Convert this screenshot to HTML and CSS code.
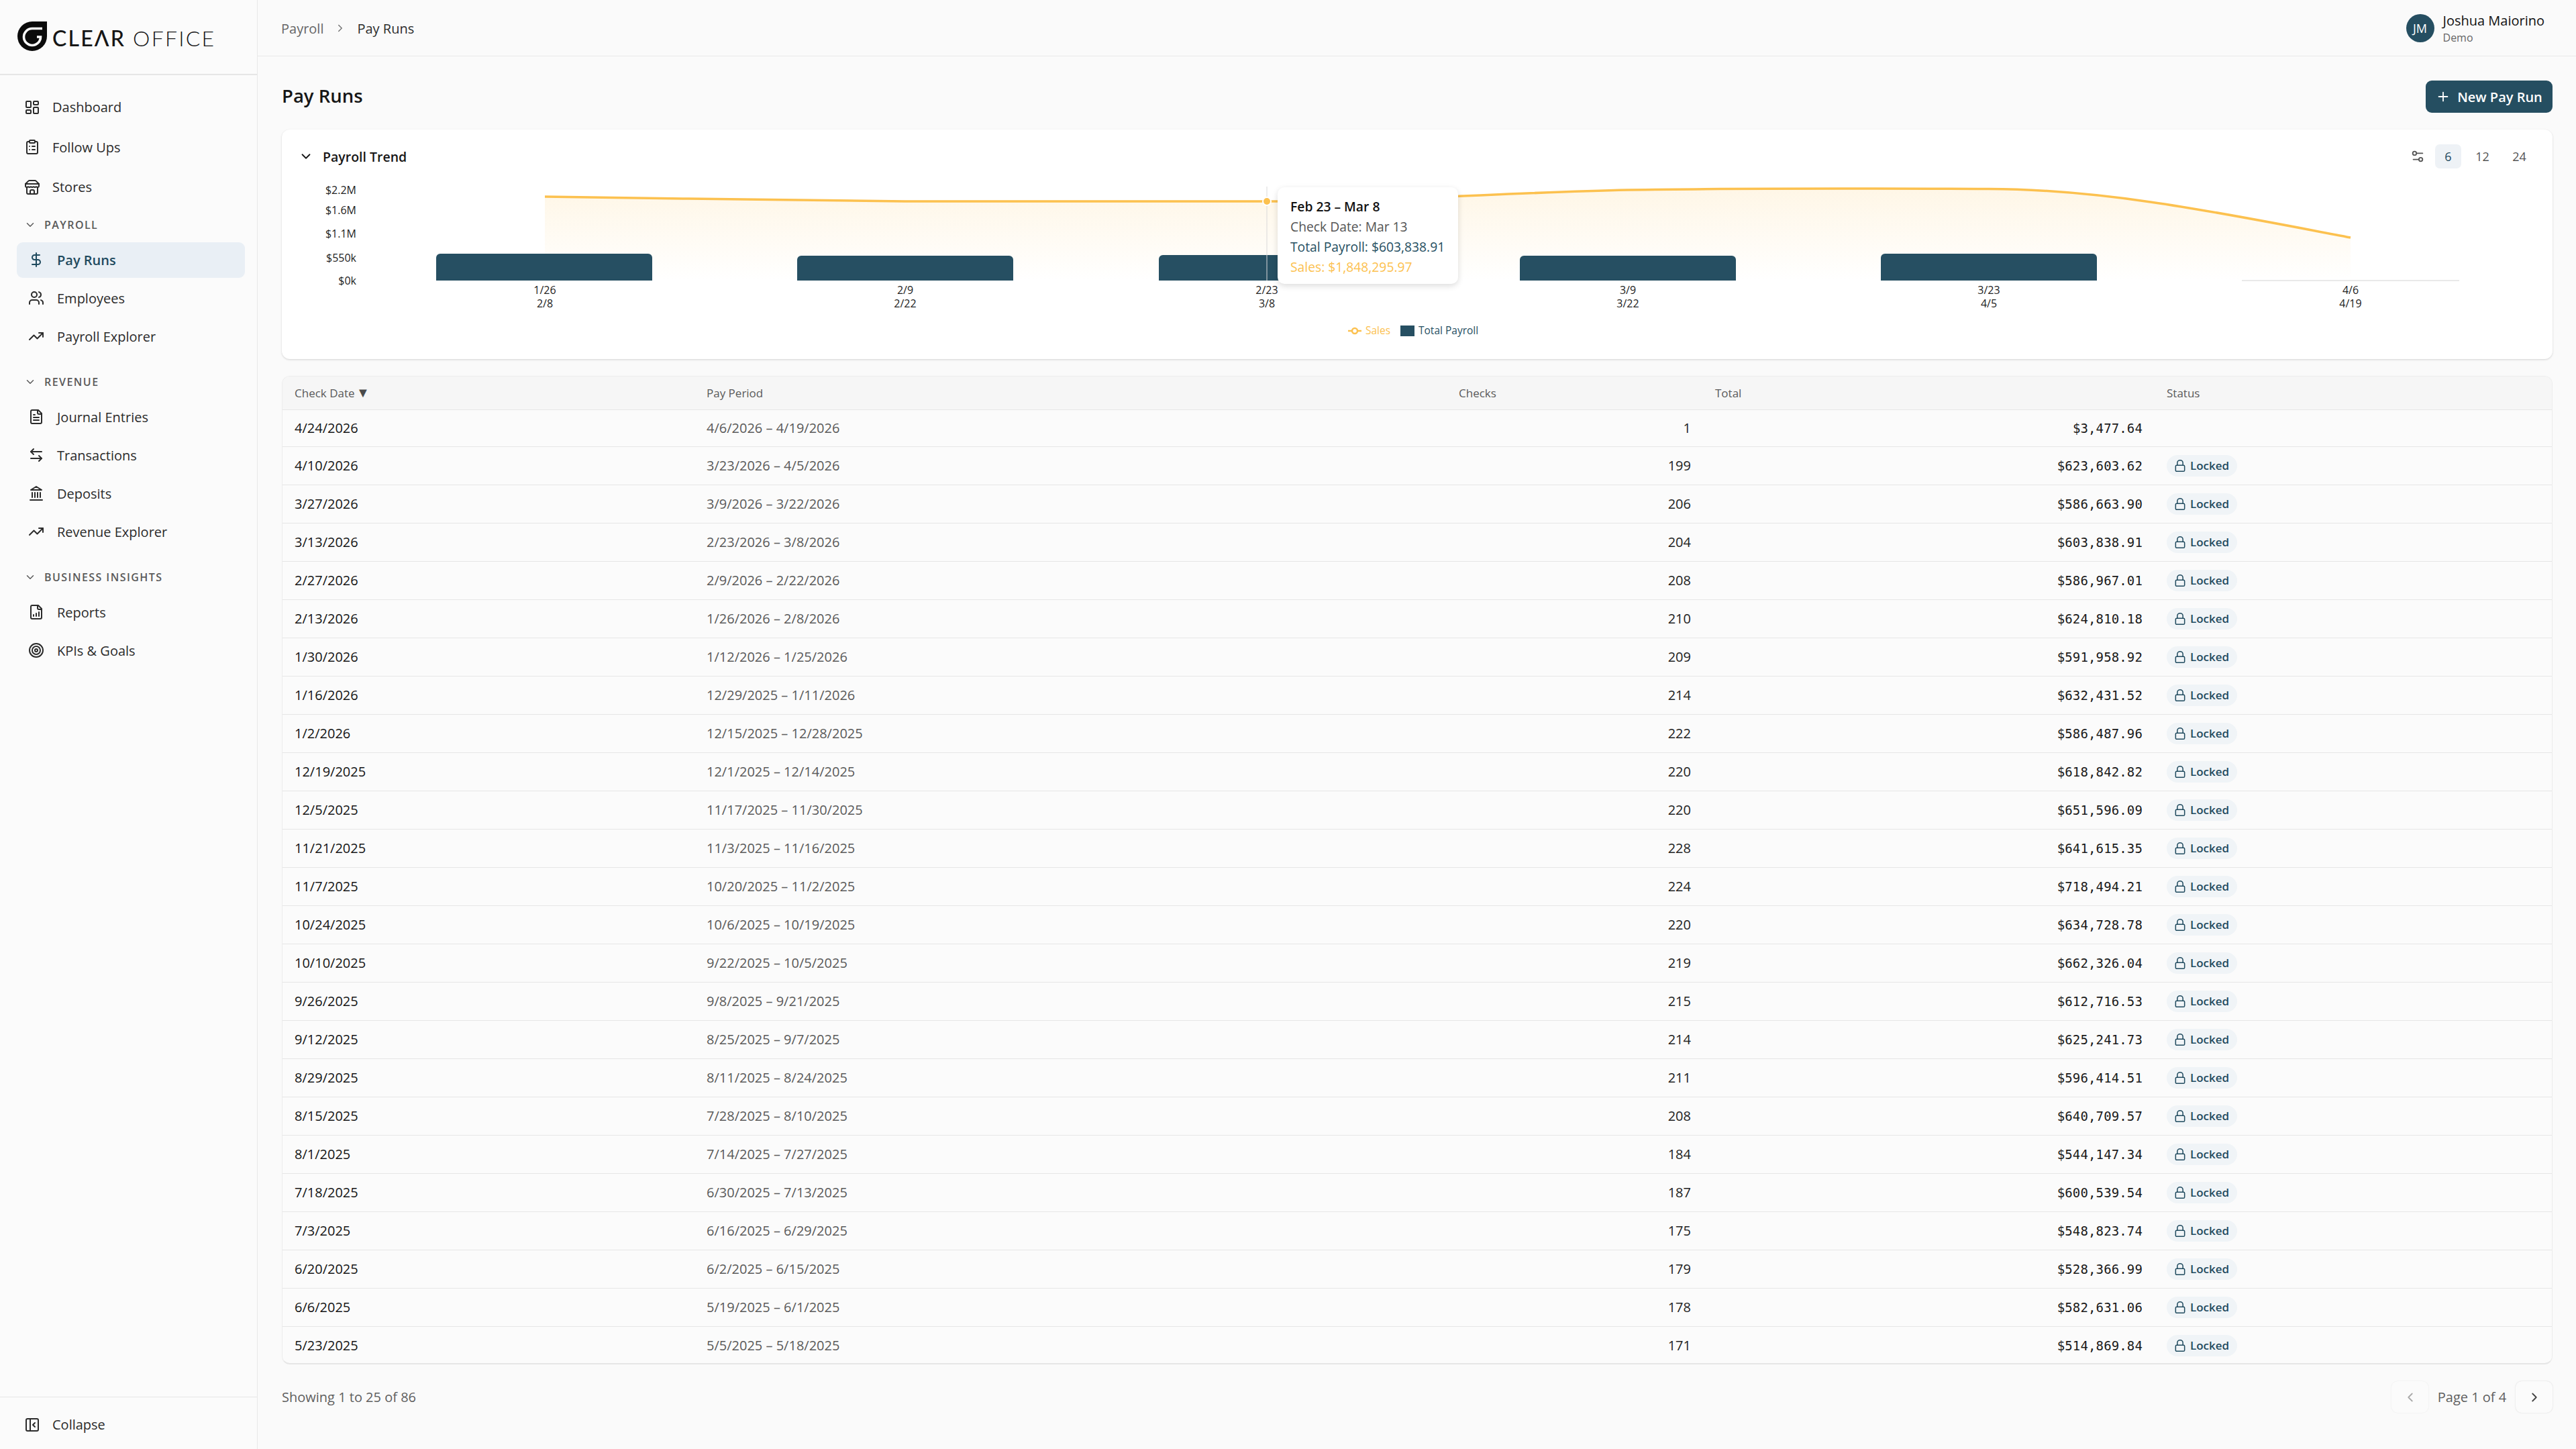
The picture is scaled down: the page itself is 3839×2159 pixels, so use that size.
FILE: index.html
```html
<!DOCTYPE html>
<html lang="en">
<head>
<meta charset="utf-8">
<title>Pay Runs</title>
<link rel="stylesheet" href="styles.css">
</head>
<body>
<svg class="defs" width="0" height="0" aria-hidden="true">
  <defs>
    <symbol id="i-dashboard" viewBox="0 0 24 24"><rect x="3" y="3" width="7" height="9" rx="1"/><rect x="14" y="3" width="7" height="5" rx="1"/><rect x="14" y="12" width="7" height="9" rx="1"/><rect x="3" y="16" width="7" height="5" rx="1"/></symbol>
    <symbol id="i-clipboard" viewBox="0 0 24 24"><rect x="8" y="2" width="8" height="4" rx="1"/><path d="M16 4h2a2 2 0 0 1 2 2v14a2 2 0 0 1-2 2H6a2 2 0 0 1-2-2V6a2 2 0 0 1 2-2h2"/><path d="M12 11h4M12 16h4M8 11h.01M8 16h.01"/></symbol>
    <symbol id="i-store" viewBox="0 0 24 24"><path d="m2 7 4.41-4.41A2 2 0 0 1 7.83 2h8.34a2 2 0 0 1 1.42.59L22 7"/><path d="M4 12v8a2 2 0 0 0 2 2h12a2 2 0 0 0 2-2v-8"/><path d="M15 22v-4a2 2 0 0 0-2-2h-2a2 2 0 0 0-2 2v4"/><path d="M2 7h20"/><path d="M22 7v3a2 2 0 0 1-2 2 2.7 2.7 0 0 1-1.59-.63.7.7 0 0 0-.82 0A2.7 2.7 0 0 1 16 12a2.7 2.7 0 0 1-1.59-.63.7.7 0 0 0-.82 0A2.7 2.7 0 0 1 12 12a2.7 2.7 0 0 1-1.59-.63.7.7 0 0 0-.82 0A2.7 2.7 0 0 1 8 12a2.7 2.7 0 0 1-1.59-.63.7.7 0 0 0-.82 0A2.7 2.7 0 0 1 4 12a2 2 0 0 1-2-2V7"/></symbol>
    <symbol id="i-dollar" viewBox="0 0 24 24"><path d="M12 2v20"/><path d="M17 5H9.5a3.5 3.5 0 0 0 0 7h5a3.5 3.5 0 0 1 0 7H6"/></symbol>
    <symbol id="i-users" viewBox="0 0 24 24"><path d="M16 21v-2a4 4 0 0 0-4-4H6a4 4 0 0 0-4 4v2"/><circle cx="9" cy="7" r="4"/><path d="M22 21v-2a4 4 0 0 0-3-3.87"/><path d="M16 3.13a4 4 0 0 1 0 7.75"/></symbol>
    <symbol id="i-trend" viewBox="0 0 24 24"><path d="M22 7l-8.5 8.5-5-5L2 17"/><path d="M16 7h6v6"/></symbol>
    <symbol id="i-file" viewBox="0 0 24 24"><path d="M15 2H6a2 2 0 0 0-2 2v16a2 2 0 0 0 2 2h12a2 2 0 0 0 2-2V7Z"/><path d="M14 2v4a2 2 0 0 0 2 2h4"/><path d="M10 9H8M16 13H8M16 17H8"/></symbol>
    <symbol id="i-swap" viewBox="0 0 24 24"><path d="M8 3 4 7l4 4"/><path d="M4 7h16"/><path d="m16 21 4-4-4-4"/><path d="M20 17H4"/></symbol>
    <symbol id="i-bank" viewBox="0 0 24 24"><path d="M3 22h18M6 18v-7M10 18v-7M14 18v-7M18 18v-7"/><path d="M12 2l8 5H4z"/></symbol>
    <symbol id="i-report" viewBox="0 0 24 24"><path d="M15 2H6a2 2 0 0 0-2 2v16a2 2 0 0 0 2 2h12a2 2 0 0 0 2-2V7Z"/><path d="M14 2v4a2 2 0 0 0 2 2h4"/><path d="M8 18v-2M12 18v-4M16 18v-6"/></symbol>
    <symbol id="i-target" viewBox="0 0 24 24"><circle cx="12" cy="12" r="10"/><circle cx="12" cy="12" r="6"/><circle cx="12" cy="12" r="2"/></symbol>
    <symbol id="i-collapse" viewBox="0 0 24 24"><rect x="3" y="3" width="18" height="18" rx="2"/><path d="M9 3v18"/><path d="m16 15-3-3 3-3"/></symbol>
    <symbol id="i-sliders" viewBox="0 0 24 24"><path d="M20 7h-9"/><path d="M14 17H5"/><circle cx="17" cy="17" r="3"/><circle cx="7" cy="7" r="3"/></symbol>
    <symbol id="i-lock" viewBox="0 0 24 24"><rect x="4" y="11" width="16" height="11" rx="2"/><path d="M7 11V7a5 5 0 0 1 10 0v4"/></symbol>
    <symbol id="i-plus" viewBox="0 0 24 24"><path d="M5 12h14M12 5v14"/></symbol>
    <symbol id="i-down" viewBox="0 0 24 24"><path d="m6 9 6 6 6-6"/></symbol>
    <symbol id="i-left" viewBox="0 0 24 24"><path d="m15 18-6-6 6-6"/></symbol>
    <symbol id="i-right" viewBox="0 0 24 24"><path d="m9 18 6-6-6-6"/></symbol>
  </defs>
</svg>

<div class="app">
  <aside class="sidebar">
    <div class="brand">
      <svg class="brand-mark" viewBox="0 0 44 44"><path class="brand-drop" d="M44 0H22A22 22 0 1 0 44 22Z"/><path class="brand-swirl" d="M37 10.5H22A12.5 12.5 0 1 0 34.5 23H29"/></svg>
      <span class="brand-name"><b>CLEΛR</b> OFFICE</span>
    </div>
    <nav class="nav">
      <a class="nav-top"><svg class="icon"><use href="#i-dashboard"/></svg>Dashboard</a>
      <a class="nav-top"><svg class="icon"><use href="#i-clipboard"/></svg>Follow Ups</a>
      <a class="nav-top"><svg class="icon"><use href="#i-store"/></svg>Stores</a>

      <div class="nav-label"><svg class="icon-sm"><use href="#i-down"/></svg>PAYROLL</div>
      <div class="nav-group">
        <a class="nav-sub active"><svg class="icon"><use href="#i-dollar"/></svg>Pay Runs</a>
        <a class="nav-sub"><svg class="icon"><use href="#i-users"/></svg>Employees</a>
        <a class="nav-sub"><svg class="icon"><use href="#i-trend"/></svg>Payroll Explorer</a>
      </div>

      <div class="nav-label spaced"><svg class="icon-sm"><use href="#i-down"/></svg>REVENUE</div>
      <div class="nav-group">
        <a class="nav-sub"><svg class="icon"><use href="#i-file"/></svg>Journal Entries</a>
        <a class="nav-sub"><svg class="icon"><use href="#i-swap"/></svg>Transactions</a>
        <a class="nav-sub"><svg class="icon"><use href="#i-bank"/></svg>Deposits</a>
        <a class="nav-sub"><svg class="icon"><use href="#i-trend"/></svg>Revenue Explorer</a>
      </div>

      <div class="nav-label spaced"><svg class="icon-sm"><use href="#i-down"/></svg>BUSINESS INSIGHTS</div>
      <div class="nav-group">
        <a class="nav-sub"><svg class="icon"><use href="#i-report"/></svg>Reports</a>
        <a class="nav-sub"><svg class="icon"><use href="#i-target"/></svg>KPIs &amp; Goals</a>
      </div>
    </nav>
    <div class="sidebar-foot">
      <a class="nav-top"><svg class="icon"><use href="#i-collapse"/></svg>Collapse</a>
    </div>
  </aside>

  <div class="main">
    <header class="topbar">
      <div class="crumbs">
        <span>Payroll</span>
        <svg class="icon-sm"><use href="#i-right"/></svg>
        <span class="crumb-now">Pay Runs</span>
      </div>
      <div class="user">
        <span class="avatar">JM</span>
        <span class="user-text"><span class="user-name">Joshua Maiorino</span><span class="user-role">Demo</span></span>
      </div>
    </header>

    <main class="content">
      <div class="page-head">
        <h1>Pay Runs</h1>
        <button class="primary"><svg class="icon-plus"><use href="#i-plus"/></svg>New Pay Run</button>
      </div>

      <section class="card">
        <div class="card-head">
          <div class="card-title"><svg class="icon-chev"><use href="#i-down"/></svg>Payroll Trend</div>
          <div class="range">
            <svg class="icon-range"><use href="#i-sliders"/></svg>
            <span class="range-btn on">6</span>
            <span class="range-btn">12</span>
            <span class="range-btn">24</span>
          </div>
        </div>
        <svg class="chart" viewBox="420 260 3383 275">
          <defs>
            <linearGradient id="sales-fill" gradientUnits="userSpaceOnUse" x1="0" y1="280" x2="0" y2="418">
              <stop offset="0" stop-color="#fcc14f" stop-opacity=".14"/>
              <stop offset="1" stop-color="#fcc14f" stop-opacity="0"/>
            </linearGradient>
          </defs>
          <g class="axis-y">
            <text x="531" y="289">$2.2M</text>
            <text x="531" y="319">$1.6M</text>
            <text x="531" y="354">$1.1M</text>
            <text x="531" y="390">$550k</text>
            <text x="531" y="424">$0k</text>
          </g>
          <path fill="url(#sales-fill)" d="M812 293C991 295 1170 299 1349 300C1529 300 1708 300 1888 300C2067 300 2247 287 2426 283C2605 280 2785 281 2964 281.5C3144 282 3323 320 3503 354L3503 418L812 418Z"/>
          <g class="bars">
            <path d="M650 418V384a6 6 0 0 1 6-6H966a6 6 0 0 1 6 6V418Z"/>
            <path d="M1188 418V387a6 6 0 0 1 6-6H1504a6 6 0 0 1 6 6V418Z"/>
            <path d="M1727 418V386a6 6 0 0 1 6-6H2043a6 6 0 0 1 6 6V418Z"/>
            <path d="M2265 418V387a6 6 0 0 1 6-6H2581a6 6 0 0 1 6 6V418Z"/>
            <path d="M2803 418V384a6 6 0 0 1 6-6H3119a6 6 0 0 1 6 6V418Z"/>
          </g>
          <rect class="bar-empty" x="3341" y="417" width="324" height="2"/>
          <path class="sales-line" d="M812 293C991 295 1170 299 1349 300C1529 300 1708 300 1888 300C2067 300 2247 287 2426 283C2605 280 2785 281 2964 281.5C3144 282 3323 320 3503 354"/>
          <path class="cursor" d="M1888 278V418"/>
          <circle class="sales-dot" cx="1888" cy="300" r="6"/>
          <g class="axis-x">
            <text x="812" y="438">1/26</text><text x="812" y="458">2/8</text>
            <text x="1349" y="438">2/9</text><text x="1349" y="458">2/22</text>
            <text x="1888" y="438">2/23</text><text x="1888" y="458">3/8</text>
            <text x="2426" y="438">3/9</text><text x="2426" y="458">3/22</text>
            <text x="2964" y="438">3/23</text><text x="2964" y="458">4/5</text>
            <text x="3503" y="438">4/6</text><text x="3503" y="458">4/19</text>
          </g>
          <g class="legend">
            <path class="legend-line" d="M2009 493H2029"/>
            <circle class="legend-dot" cx="2019" cy="493" r="4"/>
            <text class="legend-sales" x="2035" y="498">Sales</text>
            <rect class="legend-box" x="2087" y="485" width="21" height="16"/>
            <text class="legend-pay" x="2114" y="498">Total Payroll</text>
          </g>
        </svg>
        <div class="tip">
          <div class="tip-title">Feb 23 – Mar 8</div>
          <div class="tip-date">Check Date: Mar 13</div>
          <div class="tip-pay">Total Payroll: $603,838.91</div>
          <div class="tip-sales">Sales: $1,848,295.97</div>
        </div>
      </section>

      <section class="table-wrap">
        <table class="runs">
          <colgroup><col class="c1"><col class="c2"><col class="c3"><col class="c4"><col class="c5"></colgroup>
          <thead>
            <tr><th>Check Date <span class="sort">▼</span></th><th>Pay Period</th><th>Checks</th><th>Total</th><th>Status</th></tr>
          </thead>
          <tbody>
            <tr class="first"><td>4/24/2026</td><td class="period">4/6/2026 – 4/19/2026</td><td class="num">1</td><td class="money">$3,477.64</td><td></td></tr>
            <tr><td>4/10/2026</td><td class="period">3/23/2026 – 4/5/2026</td><td class="num">199</td><td class="money">$623,603.62</td><td><span class="badge"><svg class="icon-lock"><use href="#i-lock"/></svg>Locked</span></td></tr>
            <tr><td>3/27/2026</td><td class="period">3/9/2026 – 3/22/2026</td><td class="num">206</td><td class="money">$586,663.90</td><td><span class="badge"><svg class="icon-lock"><use href="#i-lock"/></svg>Locked</span></td></tr>
            <tr><td>3/13/2026</td><td class="period">2/23/2026 – 3/8/2026</td><td class="num">204</td><td class="money">$603,838.91</td><td><span class="badge"><svg class="icon-lock"><use href="#i-lock"/></svg>Locked</span></td></tr>
            <tr><td>2/27/2026</td><td class="period">2/9/2026 – 2/22/2026</td><td class="num">208</td><td class="money">$586,967.01</td><td><span class="badge"><svg class="icon-lock"><use href="#i-lock"/></svg>Locked</span></td></tr>
            <tr><td>2/13/2026</td><td class="period">1/26/2026 – 2/8/2026</td><td class="num">210</td><td class="money">$624,810.18</td><td><span class="badge"><svg class="icon-lock"><use href="#i-lock"/></svg>Locked</span></td></tr>
            <tr><td>1/30/2026</td><td class="period">1/12/2026 – 1/25/2026</td><td class="num">209</td><td class="money">$591,958.92</td><td><span class="badge"><svg class="icon-lock"><use href="#i-lock"/></svg>Locked</span></td></tr>
            <tr><td>1/16/2026</td><td class="period">12/29/2025 – 1/11/2026</td><td class="num">214</td><td class="money">$632,431.52</td><td><span class="badge"><svg class="icon-lock"><use href="#i-lock"/></svg>Locked</span></td></tr>
            <tr><td>1/2/2026</td><td class="period">12/15/2025 – 12/28/2025</td><td class="num">222</td><td class="money">$586,487.96</td><td><span class="badge"><svg class="icon-lock"><use href="#i-lock"/></svg>Locked</span></td></tr>
            <tr><td>12/19/2025</td><td class="period">12/1/2025 – 12/14/2025</td><td class="num">220</td><td class="money">$618,842.82</td><td><span class="badge"><svg class="icon-lock"><use href="#i-lock"/></svg>Locked</span></td></tr>
            <tr><td>12/5/2025</td><td class="period">11/17/2025 – 11/30/2025</td><td class="num">220</td><td class="money">$651,596.09</td><td><span class="badge"><svg class="icon-lock"><use href="#i-lock"/></svg>Locked</span></td></tr>
            <tr><td>11/21/2025</td><td class="period">11/3/2025 – 11/16/2025</td><td class="num">228</td><td class="money">$641,615.35</td><td><span class="badge"><svg class="icon-lock"><use href="#i-lock"/></svg>Locked</span></td></tr>
            <tr><td>11/7/2025</td><td class="period">10/20/2025 – 11/2/2025</td><td class="num">224</td><td class="money">$718,494.21</td><td><span class="badge"><svg class="icon-lock"><use href="#i-lock"/></svg>Locked</span></td></tr>
            <tr><td>10/24/2025</td><td class="period">10/6/2025 – 10/19/2025</td><td class="num">220</td><td class="money">$634,728.78</td><td><span class="badge"><svg class="icon-lock"><use href="#i-lock"/></svg>Locked</span></td></tr>
            <tr><td>10/10/2025</td><td class="period">9/22/2025 – 10/5/2025</td><td class="num">219</td><td class="money">$662,326.04</td><td><span class="badge"><svg class="icon-lock"><use href="#i-lock"/></svg>Locked</span></td></tr>
            <tr><td>9/26/2025</td><td class="period">9/8/2025 – 9/21/2025</td><td class="num">215</td><td class="money">$612,716.53</td><td><span class="badge"><svg class="icon-lock"><use href="#i-lock"/></svg>Locked</span></td></tr>
            <tr><td>9/12/2025</td><td class="period">8/25/2025 – 9/7/2025</td><td class="num">214</td><td class="money">$625,241.73</td><td><span class="badge"><svg class="icon-lock"><use href="#i-lock"/></svg>Locked</span></td></tr>
            <tr><td>8/29/2025</td><td class="period">8/11/2025 – 8/24/2025</td><td class="num">211</td><td class="money">$596,414.51</td><td><span class="badge"><svg class="icon-lock"><use href="#i-lock"/></svg>Locked</span></td></tr>
            <tr><td>8/15/2025</td><td class="period">7/28/2025 – 8/10/2025</td><td class="num">208</td><td class="money">$640,709.57</td><td><span class="badge"><svg class="icon-lock"><use href="#i-lock"/></svg>Locked</span></td></tr>
            <tr><td>8/1/2025</td><td class="period">7/14/2025 – 7/27/2025</td><td class="num">184</td><td class="money">$544,147.34</td><td><span class="badge"><svg class="icon-lock"><use href="#i-lock"/></svg>Locked</span></td></tr>
            <tr><td>7/18/2025</td><td class="period">6/30/2025 – 7/13/2025</td><td class="num">187</td><td class="money">$600,539.54</td><td><span class="badge"><svg class="icon-lock"><use href="#i-lock"/></svg>Locked</span></td></tr>
            <tr><td>7/3/2025</td><td class="period">6/16/2025 – 6/29/2025</td><td class="num">175</td><td class="money">$548,823.74</td><td><span class="badge"><svg class="icon-lock"><use href="#i-lock"/></svg>Locked</span></td></tr>
            <tr><td>6/20/2025</td><td class="period">6/2/2025 – 6/15/2025</td><td class="num">179</td><td class="money">$528,366.99</td><td><span class="badge"><svg class="icon-lock"><use href="#i-lock"/></svg>Locked</span></td></tr>
            <tr><td>6/6/2025</td><td class="period">5/19/2025 – 6/1/2025</td><td class="num">178</td><td class="money">$582,631.06</td><td><span class="badge"><svg class="icon-lock"><use href="#i-lock"/></svg>Locked</span></td></tr>
            <tr><td>5/23/2025</td><td class="period">5/5/2025 – 5/18/2025</td><td class="num">171</td><td class="money">$514,869.84</td><td><span class="badge"><svg class="icon-lock"><use href="#i-lock"/></svg>Locked</span></td></tr>
          </tbody>
        </table>
      </section>

      <footer class="pager">
        <span class="count">Showing 1 to 25 of 86</span>
        <div class="pages">
          <span class="page-btn off"><svg class="icon-page"><use href="#i-left"/></svg></span>
          <span class="page-text">Page 1 of 4</span>
          <span class="page-btn"><svg class="icon-page"><use href="#i-right"/></svg></span>
        </div>
      </footer>
    </main>
  </div>
</div>
</body>
</html>
```

FILE: styles.css
```css
* { box-sizing: border-box; }
html, body { margin: 0; height: 100%; }
body {
  font-family: "Open Sans", "Noto Sans", "Liberation Sans", sans-serif;
  font-size: 20px;
  color: #1c1c1c;
  background: #fafafa;
  overflow: hidden;
}
.defs { position: absolute; }
.icon, .icon-sm, .icon-plus, .icon-chev, .icon-range, .icon-lock, .icon-page {
  fill: none;
  stroke: currentColor;
  stroke-width: 2;
  stroke-linecap: round;
  stroke-linejoin: round;
  flex: none;
}
.icon { width: 24px; height: 24px; }
.icon-sm { width: 18px; height: 18px; }

.app { display: flex; height: 2159px; }

/* Sidebar */
.sidebar {
  width: 384px;
  flex: none;
  display: flex;
  flex-direction: column;
  border-right: 1px solid #e9e9e9;
  background: #fbfbfb;
}
.brand {
  height: 112px;
  flex: none;
  display: flex;
  align-items: center;
  gap: 8px;
  padding: 0 0 2px 26px;
  border-bottom: 2px solid #e6e6e6;
}
.brand-mark { width: 44px; height: 44px; flex: none; }
.brand-drop { fill: #0b0b0b; }
.brand-swirl { fill: none; stroke: #fbfbfb; stroke-width: 3.6; }
.brand-name {
  font-family: "Lato", "Open Sans", sans-serif;
  font-size: 32px;
  font-weight: 300;
  letter-spacing: 2.2px;
  color: #161616;
  white-space: nowrap;
  padding-top: 4px;
}
.brand-name b { font-weight: 500; }
.nav { flex: 1; padding: 18px 18px 0 25px; }
.nav a { display: flex; align-items: center; color: #2b2b2b; }
.nav-top { height: 59.5px; padding-left: 11px; gap: 18px; display: flex; align-items: center; color: #2b2b2b; }
.nav-label {
  height: 52px;
  display: flex;
  align-items: center;
  gap: 12px;
  padding-left: 11px;
  font-size: 16px;
  font-weight: 600;
  letter-spacing: 1.45px;
  color: #5a5a5a;
}
.nav-label.spaced { margin-top: 15px; }
.nav-group { display: flex; flex-direction: column; gap: 4px; }
.nav-sub { height: 53px; padding-left: 17px; gap: 19px; border-radius: 9px; }
.nav a.active { background: #e9eff5; color: #1f4a5e; font-weight: 600; }
.sidebar-foot { height: 78px; flex: none; border-top: 1px solid #e6e6e6; display: flex; align-items: center; padding: 4px 0 0 25px; }

/* Main */
.main { flex: 1; min-width: 0; display: flex; flex-direction: column; }
.topbar {
  height: 84px;
  flex: none;
  display: flex;
  align-items: center;
  justify-content: space-between;
  padding: 0 47px 0 35px;
  border-bottom: 1px solid #e8e8e8;
}
.crumbs { display: flex; align-items: center; gap: 16px; color: #666; font-size: 20px; padding-top: 1px; }
.crumbs .icon-sm { color: #777; }
.crumb-now { color: #2d2d2d; }
.user { display: flex; align-items: center; gap: 13px; }
.avatar {
  width: 42px; height: 42px;
  border-radius: 50%;
  background: #254e61;
  color: #fff;
  font-size: 18px;
  display: flex; align-items: center; justify-content: center;
}
.user-text { display: flex; flex-direction: column; padding-top: 2px; }
.user-name { font-size: 20px; line-height: 26px; color: #111; }
.user-role { font-size: 16px; line-height: 24px; color: #666; }

.content { flex: 1; min-height: 0; padding: 36px 35px 0 36px; }
.page-head { height: 48px; display: flex; align-items: center; justify-content: space-between; }
h1 { margin: 0 0 3px; font-size: 27.5px; font-weight: 600; color: #161616; }
.primary {
  height: 48px;
  width: 189px;
  border: 0;
  border-radius: 9px;
  background: #254e61;
  color: #fff;
  font: 600 20px "Open Sans", sans-serif;
  display: flex;
  align-items: center;
  justify-content: center;
  gap: 10px;
  padding: 0;
  white-space: nowrap;
}
.icon-plus { width: 22px; height: 22px; }

/* Chart card */
.card {
  position: relative;
  height: 342px;
  margin-top: 25px;
  background: #fff;
  border-radius: 12px;
  box-shadow: 0 1px 3px rgba(0,0,0,.16);
}
.card-head {
  height: 67px;
  display: flex;
  align-items: center;
  justify-content: space-between;
  padding: 13px 30px 0 25px;
}
.card-title { display: flex; align-items: center; gap: 14px; font-size: 19.5px; font-weight: 600; color: #161616; }
.icon-chev { width: 22px; height: 22px; }
.range { display: flex; align-items: center; color: #555; font-size: 18px; font-weight: 500; }
.icon-range { width: 22px; height: 22px; margin-right: 15px; }
.range-btn { width: 39px; height: 36px; border-radius: 7px; display: flex; align-items: center; justify-content: center; margin-right: 12px; }
.range-btn:last-child { margin: 0 0 0 4px; }
.range-btn.on { background: #eef2f6; color: #1f4a5e; }
.chart { display: block; width: 3383px; height: 275px; }
.axis-y text { text-anchor: end; font-size: 16px; fill: #222; }
.axis-x text { text-anchor: middle; font-size: 16px; fill: #222; }
.bars path { fill: #264f62; }
.bar-empty { fill: #e9e9e9; }
.sales-line { fill: none; stroke: #fcc14f; stroke-width: 3.5; }
.cursor { stroke: #d9d9d9; stroke-width: 1; }
.sales-dot { fill: #fcc14f; stroke: #fff; stroke-width: 2; }
.legend-line { stroke: #fcc14f; stroke-width: 2.5; }
.legend-dot { fill: #fff; stroke: #fcc14f; stroke-width: 2.5; }
.legend text { font-size: 15.5px; }
.legend-sales { fill: #fcc14f; }
.legend-pay { fill: #264f62; }
.legend-box { fill: #264f62; }
.tip {
  position: absolute;
  left: 1484px;
  top: 86px;
  width: 269px;
  height: 144px;
  padding: 14px 0 0 19px;
  background: #fff;
  border-radius: 10px;
  box-shadow: 0 3px 10px rgba(0,0,0,.14);
  font-size: 19.3px;
  line-height: 30px;
  white-space: nowrap;
}
.tip-title { font-weight: 600; color: #111; }
.tip-date { color: #555; }
.tip-pay { color: #264f62; }
.tip-sales { color: #fcc14f; }

/* Table */
.table-wrap {
  margin-top: 25px;
  height: 1473px;
  border-radius: 12px;
  border: 1px solid #ececec;
  border-bottom: 2px solid #e6e6e6;
  overflow: hidden;
  background: #fbfbfb;
}
.runs { width: 100%; border-collapse: collapse; table-layout: fixed; }
.c1 { width: 614px; }
.c2 { width: 1121px; }
.c3 { width: 382px; }
.c4 { width: 673px; }
.runs th {
  height: 49px;
  padding: 0 18px;
  text-align: left;
  font-size: 17px;
  font-weight: 500;
  color: #5a5a5a;
  background: #f6f6f6;
  border-bottom: 1px solid #e6e6e6;
}
.sort { font-size: 20px; line-height: 20px; color: #4a4a4a; margin-left: -2px; }
.runs td {
  height: 57px;
  padding: 0 18px;
  border-bottom: 1px solid #e6e6e6;
  color: #151515;
  font-size: 20px;
}
.runs tr.first td { height: 55px; }
.runs tr:last-child td { border-bottom: 0; }
.runs td.period { color: #5a5a5a; }
.runs td.num { text-align: right; color: #222; }
.runs td.money {
  text-align: right;
  font-family: "DejaVu Sans Mono", "Liberation Mono", monospace;
  font-size: 19px;
  letter-spacing: .13px;
  color: #1a1a1a;
}
.badge {
  display: inline-flex;
  align-items: center;
  gap: 5px;
  height: 32px;
  padding: 0 12px 0 10px;
  vertical-align: middle;
  border-radius: 16px;
  background: #f0f4f7;
  color: #1f4a5e;
  font-size: 17px;
  font-weight: 600;
}
.icon-lock { width: 20px; height: 20px; stroke-width: 1.8; }

/* Pager */
.pager { display: flex; align-items: center; justify-content: space-between; margin-top: 25px; height: 47px; }
.count, .page-text { color: #5f5f5f; font-size: 20px; }
.pages { display: flex; align-items: center; }
.page-btn {
  width: 55px; height: 47px;
  display: flex; align-items: center; justify-content: center;
  background: #fbfbfb;
  border-radius: 9px;
  box-shadow: 0 0 2px rgba(0,0,0,.16);
  color: #444;
}
.page-btn.off { color: #aaa; box-shadow: 0 0 2px rgba(0,0,0,.08); }
.page-text { width: 130px; text-align: center; }
.icon-page { width: 22px; height: 22px; }
```
